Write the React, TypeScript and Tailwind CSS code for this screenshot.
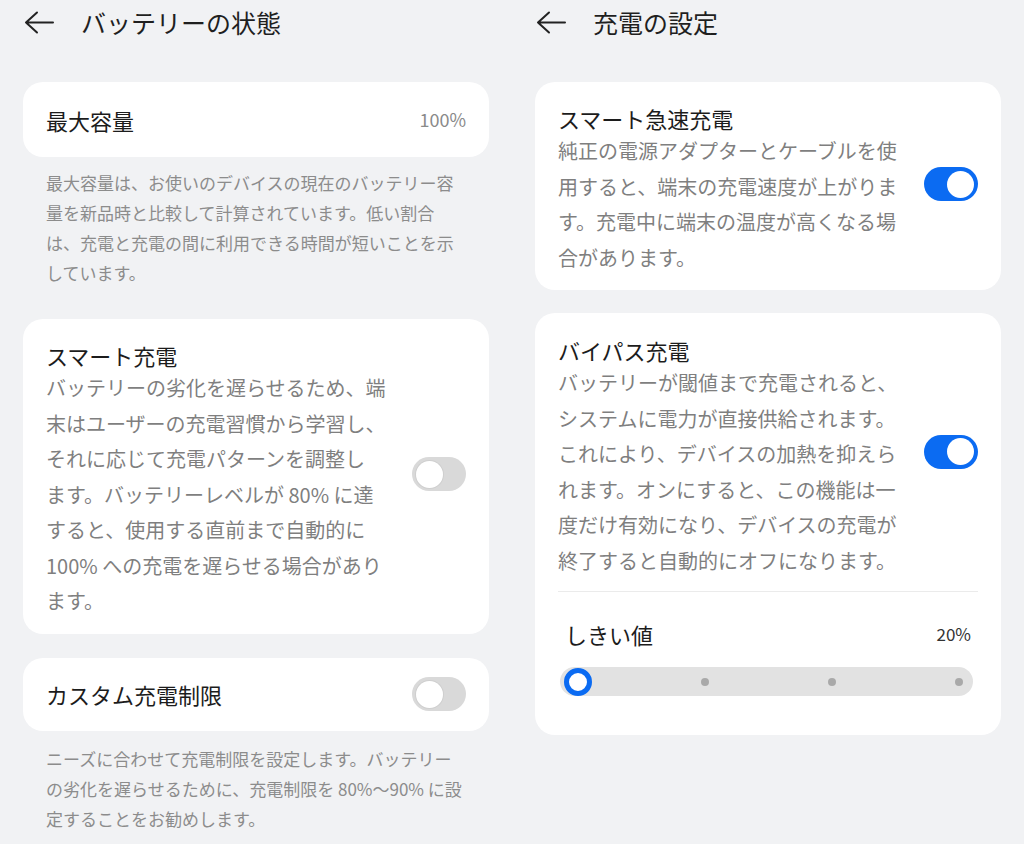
import React from "react";

function BackArrow() {
  return (
    <svg width="30" height="24" viewBox="0 0 30 24" className="ml-[1px] shrink-0" fill="none">
      <path d="M2 12.5 H29 M2 12.5 L13 2.5 M2 12.5 L13 22.5" stroke="#222222" strokeWidth="2" strokeLinecap="round" strokeLinejoin="round" />
    </svg>
  );
}

function Header({ title }: { title: string }) {
  return (
    <div className="h-[44px] flex items-center">
      <BackArrow />
      <span className="ml-[27px] text-[25px] leading-[30px] text-[#1f1f1f]">{title}</span>
    </div>
  );
}

function Toggle({ on }: { on: boolean }) {
  return on ? (
    <div className="w-[54px] h-[34px] rounded-full bg-[#0b6bf2] flex items-center justify-end pr-[4px] shrink-0">
      <div className="w-[27px] h-[27px] rounded-full bg-white" />
    </div>
  ) : (
    <div className="w-[54px] h-[34px] rounded-full bg-[#d9d9d9] flex items-center justify-start pl-[4px] shrink-0">
      <div className="w-[27px] h-[27px] rounded-full bg-white shadow-[0_0_0_1px_#cfcfcf]" />
    </div>
  );
}

function Lines({ lines, className }: { lines: string[]; className: string }) {
  return (
    <div className={className}>
      {lines.map((l, i) => (
        <div key={i} className="whitespace-nowrap">
          {l}
        </div>
      ))}
    </div>
  );
}

function ToggleCardBody({ title, lines, on }: { title: string; lines: string[]; on: boolean }) {
  return (
    <div className="flex items-center">
      <div className="flex-1">
        <div className="text-[22px] leading-[30px] text-[#1c1c1c]">{title}</div>
        <Lines lines={lines} className="text-[20px] leading-[35.5px] text-[#7f7f7f]" />
      </div>
      <div className="mb-[10px]">
        <Toggle on={on} />
      </div>
    </div>
  );
}

export default function App() {
  return (
    <div className="w-[1024px] h-[844px] overflow-hidden bg-[#f1f2f4] flex gap-[46px] px-[23px] font-['Noto_Sans_CJK_JP','Noto_Sans',sans-serif]">
      {/* Left column */}
      <div className="w-[466px] flex flex-col">
        <Header title="バッテリーの状態" />
        <div className="mt-[38px] h-[75px] bg-white rounded-[20px] px-[23px] flex items-center justify-between">
          <span className="text-[22px] leading-[30px] text-[#1c1c1c]">最大容量</span>
          <span className="text-[18px] text-[#8a8a8a]">100%</span>
        </div>
        <Lines
          className="mt-[11px] px-[23px] text-[17px] leading-[30px] text-[#8c8c8c]"
          lines={[
            "最大容量は、お使いのデバイスの現在のバッテリー容",
            "量を新品時と比較して計算されています。低い割合",
            "は、充電と充電の間に利用できる時間が短いことを示",
            "しています。",
          ]}
        />
        <div className="mt-[31px] bg-white rounded-[20px] px-[23px] pt-[21px] pb-[15px]">
          <ToggleCardBody
            title="スマート充電"
            on={false}
            lines={[
              "バッテリーの劣化を遅らせるため、端",
              "末はユーザーの充電習慣から学習し、",
              "それに応じて充電パターンを調整し",
              "ます。バッテリーレベルが 80% に達",
              "すると、使用する直前まで自動的に",
              "100% への充電を遅らせる場合があり",
              "ます。",
            ]}
          />
        </div>
        <div className="mt-[24px] h-[73px] bg-white rounded-[20px] px-[23px] flex items-center justify-between">
          <span className="text-[22px] leading-[30px] text-[#1c1c1c]">カスタム充電制限</span>
          <Toggle on={false} />
        </div>
        <Lines
          className="mt-[13px] px-[23px] text-[17px] leading-[30px] text-[#8c8c8c]"
          lines={[
            "ニーズに合わせて充電制限を設定します。バッテリー",
            "の劣化を遅らせるために、充電制限を 80%～90% に設",
            "定することをお勧めします。",
          ]}
        />
      </div>

      {/* Right column */}
      <div className="w-[466px] flex flex-col">
        <Header title="充電の設定" />
        <div className="mt-[38px] bg-white rounded-[20px] px-[23px] pt-[21px] pb-[15px]">
          <ToggleCardBody
            title="スマート急速充電"
            on={true}
            lines={[
              "純正の電源アダプターとケーブルを使",
              "用すると、端末の充電速度が上がりま",
              "す。充電中に端末の温度が高くなる場",
              "合があります。",
            ]}
          />
        </div>
        <div className="mt-[23px] bg-white rounded-[20px] px-[23px] pt-[22px] pb-[39px]">
          <ToggleCardBody
            title="バイパス充電"
            on={true}
            lines={[
              "バッテリーが閾値まで充電されると、",
              "システムに電力が直接供給されます。",
              "これにより、デバイスの加熱を抑えら",
              "れます。オンにすると、この機能は一",
              "度だけ有効になり、デバイスの充電が",
              "終了すると自動的にオフになります。",
            ]}
          />
          <div className="mt-[13px] h-px bg-[#ebebeb]" />
          <div className="mt-[27px] h-[30px] mx-[7px] flex items-center justify-between">
            <span className="text-[22px] leading-[30px] text-[#1c1c1c]">しきい値</span>
            <span className="text-[17px] text-[#333333]">20%</span>
          </div>
          <div className="mt-[18px] ml-[2px] mr-[5px] h-[29px] rounded-full bg-[#e2e2e2] flex items-center justify-between pl-[4px]">
            <div className="w-[28px] h-[28px] flex items-center justify-center">
              <div className="w-[28px] h-[28px] rounded-full border-[5px] border-[#0b6bf2] bg-white" />
            </div>
            <div className="w-[28px] h-[28px] flex items-center justify-center">
              <div className="w-[8px] h-[8px] rounded-full bg-[#a9a9a9]" />
            </div>
            <div className="w-[28px] h-[28px] flex items-center justify-center">
              <div className="w-[8px] h-[8px] rounded-full bg-[#a9a9a9]" />
            </div>
            <div className="w-[28px] h-[28px] flex items-center justify-center">
              <div className="w-[8px] h-[8px] rounded-full bg-[#a9a9a9]" />
            </div>
          </div>
        </div>
      </div>
    </div>
  );
}
